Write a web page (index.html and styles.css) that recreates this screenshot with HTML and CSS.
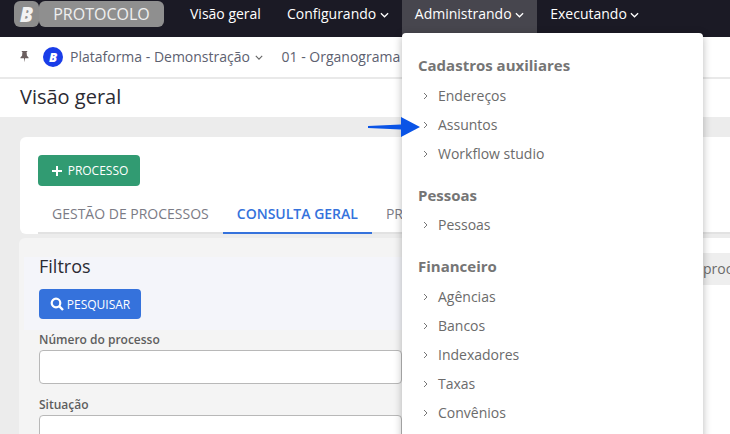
FILE: index.html
```html
<!DOCTYPE html>
<html lang="pt-BR">
<head>
  <meta charset="UTF-8">
  <title>Protocolo</title>
  <link rel="stylesheet" href="styles.css">
</head>
<body>
  <svg width="0" height="0" class="defs">
    <symbol id="down" viewBox="0 0 10 6"><path d="M1 1l4 4 4-4" fill="none" stroke="currentColor" stroke-width="1.4"/></symbol>
    <symbol id="right" viewBox="0 0 5 8"><path d="M1 1l3 3-3 3" fill="none" stroke="currentColor" stroke-width="1"/></symbol>
  </svg>

  <header class="topbar">
    <div class="brand">
      <span class="brand-mark">B</span>
      <span class="brand-name">PROTOCOLO</span>
    </div>
    <nav class="nav">
      <a class="nav-item">Visão geral</a>
      <a class="nav-item">Configurando <svg class="caret"><use href="#down"/></svg></a>
      <a class="nav-item active">Administrando <svg class="caret"><use href="#down"/></svg></a>
      <a class="nav-item">Executando <svg class="caret"><use href="#down"/></svg></a>
    </nav>
  </header>

  <div class="crumbs">
    <svg class="pin" viewBox="0 0 10 14"><path d="M2 1h6v1H7.300l.4 4.200L9.500 8v1H5.600L5 13.500 4.400 9H.5V8l1.800-1.800L2.700 2H2z" fill="#6b5f5f"/></svg>
    <span class="org-dot">B</span>
    <span class="crumb">Plataforma - Demonstração <svg class="caret small"><use href="#down"/></svg></span>
    <span class="crumb">01 - Organograma</span>
  </div>

  <div class="page-title">Visão geral</div>

  <main class="content">
    <section class="card">
      <button class="btn btn-green">
        <svg class="plus" viewBox="0 0 10 10"><path d="M5 0v10M0 5h10" stroke="#fff" stroke-width="2"/></svg>
        PROCESSO
      </button>
      <div class="tabs">
        <a class="tab">GESTÃO DE PROCESSOS</a>
        <a class="tab active">CONSULTA GERAL</a>
        <a class="tab">PROCESSOS</a>
      </div>
    </section>

    <div class="columns">
      <section class="filters">
        <div class="filters-head">
          <h3>Filtros</h3>
          <button class="btn btn-blue">
            <svg class="search" viewBox="0 0 14 14"><circle cx="6" cy="6" r="4.300" fill="none" stroke="#fff" stroke-width="2.200"/><path d="M9.200 9.200L13 13" stroke="#fff" stroke-width="2.400"/></svg>
            PESQUISAR
          </button>
        </div>
        <label class="field-label">Número do processo</label>
        <input class="field" type="text">
        <label class="field-label">Situação</label>
        <input class="field" type="text">
      </section>
      <section class="results">
        <div class="results-bar">processos</div>
      </section>
    </div>
  </main>

  <div class="menu">
    <h4>Cadastros auxiliares</h4>
    <ul>
      <li><svg class="chev"><use href="#right"/></svg>Endereços</li>
      <li><svg class="chev"><use href="#right"/></svg>Assuntos</li>
      <li><svg class="chev"><use href="#right"/></svg>Workflow studio</li>
    </ul>
    <h4>Pessoas</h4>
    <ul>
      <li><svg class="chev"><use href="#right"/></svg>Pessoas</li>
    </ul>
    <h4>Financeiro</h4>
    <ul>
      <li><svg class="chev"><use href="#right"/></svg>Agências</li>
      <li><svg class="chev"><use href="#right"/></svg>Bancos</li>
      <li><svg class="chev"><use href="#right"/></svg>Indexadores</li>
      <li><svg class="chev"><use href="#right"/></svg>Taxas</li>
      <li><svg class="chev"><use href="#right"/></svg>Convênios</li>
    </ul>
  </div>

  <svg class="arrow" viewBox="0 0 52 20"><path d="M0 9l33-1.500V0l19 10-19 10v-7.500L0 11z" fill="#0a54e6"/></svg>
</body>
</html>
```

FILE: styles.css
```css
html, body { margin: 0; padding: 0; height: 434px; overflow: hidden; }
body { font-family: "Open Sans", Arial, sans-serif; font-size: 14px; background: #fff; color: #333; position: relative; }
.defs { position: absolute; }

.topbar { display: flex; height: 37px; background: #1b1a25; padding-left: 14px; }
.brand { display: flex; height: 26px; margin-top: 1px; }
.brand-mark { width: 25px; background: #8c8c8c; border-radius: 6px; color: #f2f2f2; font-weight: 800; font-style: italic; font-size: 21px; line-height: 26px; text-align: center; }
.brand-name { width: 125px; background: #8f8f8f; border-radius: 6px; color: #efefef; font-size: 16px; line-height: 27px; text-align: center; }
.nav { display: flex; margin-left: 13px; }
.nav-item { display: flex; align-items: center; gap: 3.6px; padding: 0 13px 10px; color: #fff; white-space: nowrap; }
.nav-item.active { background: #47464e; }
.caret { width: 9px; height: 6px; margin-top: 2px; }
.caret.small { width: 8px; height: 5px; color: #666; margin-left: 1px; margin-top: 0; vertical-align: 2px; }

.crumbs { display: flex; align-items: center; height: 39px; padding: 0 0 1px 20px; border-bottom: 2px solid #e9e9e9; color: #5d6170; white-space: nowrap; }
.pin { width: 9px; height: 13px; margin-right: 14px; }
.org-dot { width: 20px; height: 20px; border-radius: 50%; background: #1a3de8; color: #fff; font-size: 13px; font-weight: 800; font-style: italic; line-height: 20px; text-align: center; margin-right: 7px; }
.crumb { margin-right: 19px; }

.page-title { height: 38px; padding-left: 20px; font-size: 20px; line-height: 36px; color: #2b2b33; }

.content { background: #ececec; height: 317px; padding-top: 20px; box-sizing: border-box; }
.card { background: #fff; margin-left: 20px; padding: 18px 0 0 18px; height: 97px; box-sizing: border-box; border-radius: 6px 0 0 6px; }
.btn { display: flex; align-items: center; justify-content: center; border: 0; border-radius: 4px; color: #fff; font-family: inherit; font-size: 12px; width: 102px; }
.btn-green { background: #319b72; height: 31px; gap: 6px; padding-left: 8px; }
.plus { width: 10px; height: 10px; }
.btn-blue { background: #3572dc; height: 30px; gap: 3px; }
.search { width: 14px; height: 14px; }

.tabs { display: flex; margin-top: 14px; height: 32px; border-bottom: 2px solid #e2e2e2; }
.tab { padding: 0 14px; line-height: 27px; font-size: 14px; color: #7b7b85; white-space: nowrap; }
.tab.active { color: #3572dc; font-weight: 600; border-bottom: 2px solid #3572dc; height: 32px; }

.columns { display: flex; margin: 4px 0 0 19px; height: 196px; }
.filters { width: 383px; flex: none; background: #f4f4f4; border-radius: 6px 0 0 0; padding-top: 19px; }
.filters-head { background: #f4f5fa; margin-left: 5px; height: 73px; padding-left: 15px; }
.filters-head h3 { margin: 0; font-size: 18px; font-weight: 400; line-height: 18px; color: #2b2b33; padding-bottom: 14px; }
.field-label { display: block; margin: 0 0 0 20px; height: 20px; font-size: 12px; font-weight: 600; line-height: 19px; color: #5e5e5e; }
.field { display: block; margin: 0 0 11px 20px; width: calc(100% - 20px); height: 34px; box-sizing: border-box; background: #fff; border: 1px solid #b8b8b8; border-radius: 4px; }
.results { flex: 1; background: #fff; padding-top: 15px; }
.results-bar { background: #eee; height: 32px; line-height: 32px; padding-left: 301px; color: #6b6b6b; font-size: 14px; white-space: nowrap; overflow: hidden; }

.menu { position: absolute; left: 402px; top: 33px; width: 301px; height: 420px; box-sizing: border-box; padding: 22px 16px 0; background: #fff; border-radius: 4px 4px 0 0; box-shadow: 0 2px 8px rgba(0,0,0,.28); }
.menu h4 { margin: 0; font-size: 15px; font-weight: 700; line-height: 20px; color: #757575; }
.menu h4:first-child { margin-bottom: 6px; }
.menu ul { list-style: none; margin: 5px 0 17px; padding: 0; }
.menu li { display: flex; align-items: center; height: 29px; color: #6b6b6b; }
.menu li:first-child { margin-top: 0; }
.chev { width: 5px; height: 8px; margin: 1px 10px 0 5px; color: #777; }
.menu ul:last-child { margin-top: 6px; }

.arrow { position: absolute; left: 368px; top: 117px; width: 52px; height: 20px; }
```
